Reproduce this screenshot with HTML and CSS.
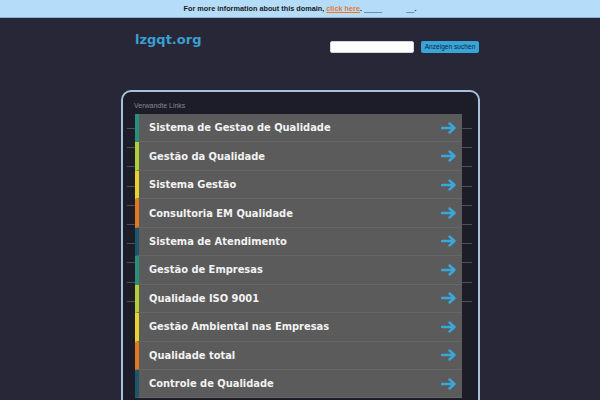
FILE: index.html
```html
<!DOCTYPE html>
<html>
<head>
<meta charset="utf-8">
<link rel="stylesheet" href="styles.css">
</head>
<body>
<div class="topbar">For more information about this domain, <a class="info-link" href="#">click here</a>. <span class="blank">&nbsp;&nbsp;&nbsp;&nbsp;&nbsp;&nbsp;&nbsp;&nbsp;&nbsp;</span><span class="gap"></span><span class="blank">&nbsp;&nbsp;&nbsp;&nbsp;</span>.</div>
<div class="wrap">
  <div class="header">
    <div class="logo">lzgqt.org</div>
    <form class="search">
      <input class="search-input" type="text">
      <button class="search-btn" type="button">Anzeigen suchen</button>
    </form>
  </div>
  <div class="panel">
    <div class="label">Verwandte Links</div>
    <ul class="links">
      <li class="row c1"><span class="txt">Sistema de Gestao de Qualidade</span><svg class="arrow" viewBox="0 0 16 12"><path d="M1 6H13M8.5 1.5L13.5 6L8.5 10.5" fill="none" stroke="#3ba7d9" stroke-width="2.4" stroke-linecap="round" stroke-linejoin="round"/></svg></li>
      <li class="row c2"><span class="txt">Gestão da Qualidade</span><svg class="arrow" viewBox="0 0 16 12"><path d="M1 6H13M8.5 1.5L13.5 6L8.5 10.5" fill="none" stroke="#3ba7d9" stroke-width="2.4" stroke-linecap="round" stroke-linejoin="round"/></svg></li>
      <li class="row c3"><span class="txt">Sistema Gestão</span><svg class="arrow" viewBox="0 0 16 12"><path d="M1 6H13M8.5 1.5L13.5 6L8.5 10.5" fill="none" stroke="#3ba7d9" stroke-width="2.4" stroke-linecap="round" stroke-linejoin="round"/></svg></li>
      <li class="row c4"><span class="txt">Consultoria EM Qualidade</span><svg class="arrow" viewBox="0 0 16 12"><path d="M1 6H13M8.5 1.5L13.5 6L8.5 10.5" fill="none" stroke="#3ba7d9" stroke-width="2.4" stroke-linecap="round" stroke-linejoin="round"/></svg></li>
      <li class="row c5"><span class="txt">Sistema de Atendimento</span><svg class="arrow" viewBox="0 0 16 12"><path d="M1 6H13M8.5 1.5L13.5 6L8.5 10.5" fill="none" stroke="#3ba7d9" stroke-width="2.4" stroke-linecap="round" stroke-linejoin="round"/></svg></li>
      <li class="row c1"><span class="txt">Gestão de Empresas</span><svg class="arrow" viewBox="0 0 16 12"><path d="M1 6H13M8.5 1.5L13.5 6L8.5 10.5" fill="none" stroke="#3ba7d9" stroke-width="2.4" stroke-linecap="round" stroke-linejoin="round"/></svg></li>
      <li class="row c2"><span class="txt">Qualidade ISO 9001</span><svg class="arrow" viewBox="0 0 16 12"><path d="M1 6H13M8.5 1.5L13.5 6L8.5 10.5" fill="none" stroke="#3ba7d9" stroke-width="2.4" stroke-linecap="round" stroke-linejoin="round"/></svg></li>
      <li class="row c3"><span class="txt">Gestão Ambiental nas Empresas</span><svg class="arrow" viewBox="0 0 16 12"><path d="M1 6H13M8.5 1.5L13.5 6L8.5 10.5" fill="none" stroke="#3ba7d9" stroke-width="2.4" stroke-linecap="round" stroke-linejoin="round"/></svg></li>
      <li class="row c4"><span class="txt">Qualidade total</span><svg class="arrow" viewBox="0 0 16 12"><path d="M1 6H13M8.5 1.5L13.5 6L8.5 10.5" fill="none" stroke="#3ba7d9" stroke-width="2.4" stroke-linecap="round" stroke-linejoin="round"/></svg></li>
      <li class="row c5"><span class="txt">Controle de Qualidade</span><svg class="arrow" viewBox="0 0 16 12"><path d="M1 6H13M8.5 1.5L13.5 6L8.5 10.5" fill="none" stroke="#3ba7d9" stroke-width="2.4" stroke-linecap="round" stroke-linejoin="round"/></svg></li>
    </ul>
  </div>
</div>
</body>
</html>
```
FILE: styles.css
```css
html, body {
  margin: 0;
  padding: 0;
  background: #272737;
  height: 100%;
  overflow: hidden;
}
.topbar {
  height: 17px;
  line-height: 17px;
  background: #b5ddf9;
  border-bottom: 1px solid #8fb4d2;
  text-align: center;
  font-family: "Liberation Sans", Arial, sans-serif;
  font-weight: bold;
  font-size: 7.3px;
  color: #1a1a1a;
}
.info-link {
  color: #e8782a;
  text-decoration: underline;
}
.blank {
  text-decoration: underline;
  text-decoration-color: #7a8da0;
}
.gap {
  display: inline-block;
  width: 24px;
}
.wrap {
  width: 360px;
  margin: 0 auto;
}
.header {
  display: flex;
  justify-content: space-between;
  align-items: flex-start;
  height: 72px;
  padding-left: 15px;
  padding-right: 1px;
}
.logo {
  font-family: "DejaVu Sans", Verdana, sans-serif;
  font-weight: bold;
  font-size: 13px;
  color: #3a9fd0;
  margin-top: 14px;
}
.search {
  display: flex;
  gap: 7px;
  margin: 23px 0 0 0;
}
.search-input {
  width: 84px;
  height: 12px;
  box-sizing: border-box;
  border: 1px solid #cfd6df;
  border-radius: 2px;
  background: #fff;
  padding: 0;
  margin: 0;
}
.search-btn {
  width: 58px;
  height: 12px;
  box-sizing: border-box;
  border: none;
  border-radius: 2px;
  background: #38a4d8;
  color: #10263a;
  font-family: "Liberation Sans", Arial, sans-serif;
  font-size: 6.6px;
  padding: 0;
  margin: 0;
  line-height: 12px;
}
.panel {
  width: 359px;
  margin-left: 1px;
  box-sizing: border-box;
  height: 330px;
  border: 2px solid #a9c1d8;
  border-radius: 10px;
  background:
    repeating-linear-gradient(to bottom, #4f4f5c 0 1px, transparent 1px 19.2px) 4px 36px / 345px 174px no-repeat,
    #1d1d2a;
  padding: 9px 0 0 12px;
}
.label {
  font-family: "Liberation Sans", Arial, sans-serif;
  font-size: 7px;
  color: #858590;
  height: 13px;
  line-height: 10px;
  margin-left: -1px;
}
.links {
  list-style: none;
  margin: 0;
  padding: 0;
  width: 327px;
}
.row {
  display: flex;
  align-items: center;
  justify-content: space-between;
  box-sizing: border-box;
  height: 28.44px;
  background: #5b5b5b;
  border-left: 4px solid #2a8f7a;
  border-bottom: 1px solid #666;
  padding: 0 5px 0 10px;
}
.c1 { border-left-color: #2a8f7a; }
.c2 { border-left-color: #b2cf36; }
.c3 { border-left-color: #e6d22a; }
.c4 { border-left-color: #e2771c; }
.c5 { border-left-color: #1b566a; }
.txt {
  font-family: "DejaVu Sans Condensed", "DejaVu Sans", Verdana, sans-serif;
  font-stretch: condensed;
  font-weight: bold;
  font-size: 11px;
  color: #f2f2f2;
}
.arrow {
  width: 16px;
  height: 12px;
}
```
